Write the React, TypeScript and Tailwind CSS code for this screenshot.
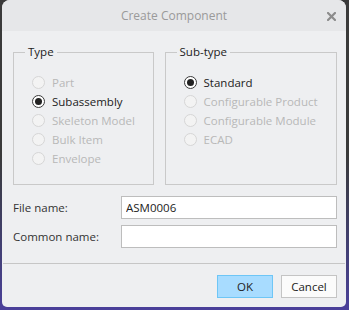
import React from 'react'

type Opt = { label: string, checked?: boolean, disabled?: boolean }

const typeOptions: Opt[] = [
    { label: 'Part', disabled: true },
    { label: 'Subassembly', checked: true },
    { label: 'Skeleton Model', disabled: true },
    { label: 'Bulk Item', disabled: true },
    { label: 'Envelope', disabled: true },
]

const subTypeOptions: Opt[] = [
    { label: 'Standard', checked: true },
    { label: 'Configurable Product', disabled: true },
    { label: 'Configurable Module', disabled: true },
    { label: 'ECAD', disabled: true },
]

const Radio = ({ label, checked, disabled }: Opt) => (
    <div className="flex items-center h-[19px]">
        <span className={
            'w-[13px] h-[13px] rounded-full border flex items-center justify-center ' +
            (disabled ? 'border-[#d6d6d6] bg-[#f3f3f3]' : 'border-[#3a3a3a] bg-white')
        }>
            {checked && <span className="w-[7px] h-[7px] rounded-full bg-[#222]" />}
        </span>
        <span className={'ml-[7px] ' + (disabled ? 'text-[#b8b8b8]' : 'text-[#222]')}>{label}</span>
    </div>
)

const Group = ({ title, options, className }: { title: string, options: Opt[], className: string }) => (
    <fieldset className={'border border-[#c9c9c9] h-[141px] ' + className}>
        <legend className="ml-[11px] px-[3px] text-[#222] leading-[16px]">{title}</legend>
        <div className="flex flex-col pl-[18px] pt-[13px]">
            {options.map(o => <Radio key={o.label} {...o} />)}
        </div>
    </fieldset>
)

export default function App() {
    return (
        <div className="w-[349px] h-[310px] bg-gradient-to-b from-[#3a3a3a] via-[#3a3a3a] to-[#4a3f9a] pl-[2px] pr-[3px] pb-[3px]" style={{ fontFamily: '"Open Sans", "Noto Sans", sans-serif' }}>
            <div className="h-full rounded-t-[8px] rounded-b-[5px] bg-[#eeeff1] overflow-hidden flex flex-col text-[11.5px]">
                <div className="h-[31px] bg-[#e6e7e9] flex items-center justify-center relative">
                    <span className="text-[#9a9a9a] text-[12px]">Create Component</span>
                    <svg className="absolute right-[10px] top-[12px]" width="9" height="9" viewBox="0 0 9 9">
                        <path d="M1 1 L8 8 M8 1 L1 8" stroke="#8c8c8c" strokeWidth="2.2" strokeLinecap="square" />
                    </svg>
                </div>
                <div className="flex gap-[11px] pl-[11px] pr-[9px] mt-[13px]">
                    <Group title="Type" options={typeOptions} className="w-[141px]" />
                    <Group title="Sub-type" options={subTypeOptions} className="w-[173px]" />
                </div>
                <div className="flex flex-col gap-[6px] pl-[11px] pr-[9px] mt-[11px] text-[#333]">
                    <div className="flex items-center">
                        <span className="w-[108px]">File name:</span>
                        <input readOnly value="ASM0006" className="w-[216px] h-[23px] bg-white border border-[#bdbdbd] px-[4px] text-[11.5px] text-[#222] outline-none" style={{ fontFamily: 'inherit' }} />
                    </div>
                    <div className="flex items-center">
                        <span className="w-[108px]">Common name:</span>
                        <input readOnly value="" className="w-[216px] h-[23px] bg-white border border-[#bdbdbd] px-[4px] outline-none" />
                    </div>
                </div>
                <div className="mt-[15px] mx-[1px] h-[1px] bg-[#c6c6c6]" />
                <div className="flex justify-end gap-[8px] pr-[9px] mt-[11px]">
                    <button className="w-[56px] h-[23px] bg-[#a8dcff] border border-[#6ec6f6] text-[#222]">OK</button>
                    <button className="w-[56px] h-[23px] bg-[#fbfbfb] border border-[#c4c4c4] text-[#222]">Cancel</button>
                </div>
            </div>
        </div>
    )
}
